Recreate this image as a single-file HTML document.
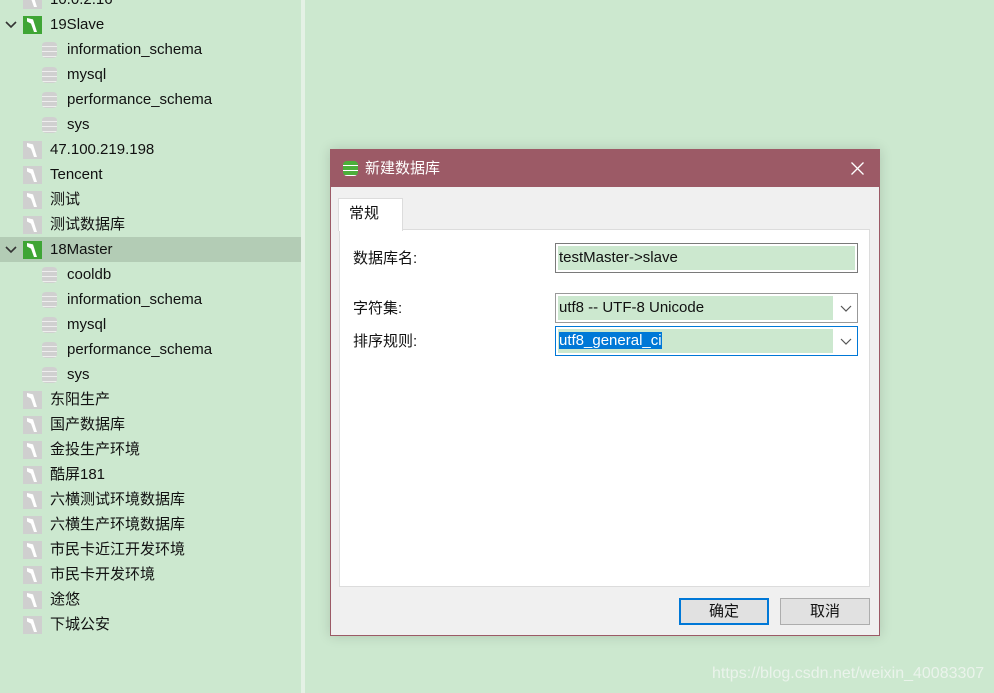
<!DOCTYPE html><html><head><meta charset="utf-8"><style>
body{margin:0;width:994px;height:693px;background:#cce8cf;position:relative;overflow:hidden;font-family:"Liberation Sans","Noto Sans CJK SC",sans-serif;font-size:15px;color:#111}
.side{position:absolute;left:0;top:0;width:301px;height:693px;background:#cce8cf}
.div{position:absolute;left:301px;top:0;width:4px;height:693px;background:#e4f1e5}
.row{position:absolute;left:0;width:301px;height:25px;line-height:25px}
.row.sel{background:#b3ccb5}
.srv{position:absolute;left:23px;top:4px;width:19px;height:18px;background:#cfcfcf}
.srv.g{background:#3fa535}
.srv::after{content:"";position:absolute;left:4px;top:2px;width:10px;height:14px;background:#fff;clip-path:polygon(0 0,60% 10%,100% 100%,70% 100%,40% 40%,0 25%)}
.db{position:absolute;left:42px;top:5px;width:15px;height:16px;background:repeating-linear-gradient(#d0d0d0 0 4px,#eee 4px 5px);border-radius:4px/3px}
.t1{position:absolute;left:50px}.t2{position:absolute;left:67px}
.arr{position:absolute;left:5px;top:9px;width:12px;height:8px}
.dlg{position:absolute;left:330px;top:149px;width:550px;height:487px;background:#f0f0f0;border:1px solid #9c5a66;box-sizing:border-box;box-shadow:0 0 12px rgba(0,0,0,.15)}
.tb{position:absolute;left:0;top:0;right:0;height:37px;background:#9c5a66;color:#fff;line-height:37px}
.panel{position:absolute;left:8px;top:79px;width:531px;height:358px;background:#fff;border:1px solid #dcdcdc;box-sizing:border-box}
.tab{position:absolute;left:7px;top:48px;width:65px;height:33px;background:#fff;border:1px solid #dcdcdc;border-bottom:none;box-sizing:border-box;line-height:30px;padding-left:10px}
.lbl{position:absolute;left:22px}
.inp{position:absolute;left:224px;width:303px;height:30px;border:1px solid #7a7a7a;box-sizing:border-box;background:#fff}
.inp .f{position:absolute;left:2px;top:2px;bottom:2px;background:#cce8cf;line-height:24px;padding-left:1px}
.inp svg{position:absolute;right:5px;top:11px}
.btn{position:absolute;top:448px;width:90px;height:27px;background:#e1e1e1;border:1px solid #adadad;box-sizing:border-box;text-align:center;line-height:25px}
</style></head><body>
<div class="side">
<div class="row" style="top:-13px"><div class="srv"></div><span class="t1">10.0.2.16</span></div>
<div class="row" style="top:12px"><svg class="arr" viewBox="0 0 12 8"><path d="M1 1L6 6L11 1" fill="none" stroke="#333" stroke-width="1.6"/></svg><div class="srv g"></div><span class="t1">19Slave</span></div>
<div class="row" style="top:37px"><div class="db"></div><span class="t2">information_schema</span></div>
<div class="row" style="top:62px"><div class="db"></div><span class="t2">mysql</span></div>
<div class="row" style="top:87px"><div class="db"></div><span class="t2">performance_schema</span></div>
<div class="row" style="top:112px"><div class="db"></div><span class="t2">sys</span></div>
<div class="row" style="top:137px"><div class="srv"></div><span class="t1">47.100.219.198</span></div>
<div class="row" style="top:162px"><div class="srv"></div><span class="t1">Tencent</span></div>
<div class="row" style="top:187px"><div class="srv"></div><span class="t1">测试</span></div>
<div class="row" style="top:212px"><div class="srv"></div><span class="t1">测试数据库</span></div>
<div class="row sel" style="top:237px"><svg class="arr" viewBox="0 0 12 8"><path d="M1 1L6 6L11 1" fill="none" stroke="#333" stroke-width="1.6"/></svg><div class="srv g"></div><span class="t1">18Master</span></div>
<div class="row" style="top:262px"><div class="db"></div><span class="t2">cooldb</span></div>
<div class="row" style="top:287px"><div class="db"></div><span class="t2">information_schema</span></div>
<div class="row" style="top:312px"><div class="db"></div><span class="t2">mysql</span></div>
<div class="row" style="top:337px"><div class="db"></div><span class="t2">performance_schema</span></div>
<div class="row" style="top:362px"><div class="db"></div><span class="t2">sys</span></div>
<div class="row" style="top:387px"><div class="srv"></div><span class="t1">东阳生产</span></div>
<div class="row" style="top:412px"><div class="srv"></div><span class="t1">国产数据库</span></div>
<div class="row" style="top:437px"><div class="srv"></div><span class="t1">金投生产环境</span></div>
<div class="row" style="top:462px"><div class="srv"></div><span class="t1">酷屏181</span></div>
<div class="row" style="top:487px"><div class="srv"></div><span class="t1">六横测试环境数据库</span></div>
<div class="row" style="top:512px"><div class="srv"></div><span class="t1">六横生产环境数据库</span></div>
<div class="row" style="top:537px"><div class="srv"></div><span class="t1">市民卡近江开发环境</span></div>
<div class="row" style="top:562px"><div class="srv"></div><span class="t1">市民卡开发环境</span></div>
<div class="row" style="top:587px"><div class="srv"></div><span class="t1">途悠</span></div>
<div class="row" style="top:612px"><div class="srv"></div><span class="t1">下城公安</span></div>
</div>
<div class="div"></div>
<div class="dlg">
<div class="tb"><span style="position:absolute;left:12px;top:11px;width:15px;height:15px;border-radius:4px;background:repeating-linear-gradient(#4caf3a 0 4px,#fff 4px 5px)"></span><span style="position:absolute;left:34px">新建数据库</span><svg style="position:absolute;right:15px;top:12px" width="13" height="13" viewBox="0 0 13 13"><path d="M0.5 0.5L12.5 12.5M12.5 0.5L0.5 12.5" stroke="#fff" stroke-width="1.3"/></svg></div>
<div class="panel"></div>
<div class="tab">常规</div>
<span class="lbl" style="top:98px;line-height:22px">数据库名:</span>
<div class="inp" style="top:93px"><div class="f" style="right:2px">testMaster-&gt;slave</div></div>
<span class="lbl" style="top:148px;line-height:22px">字符集:</span>
<div class="inp" style="top:143px;border-color:#999"><div class="f" style="right:24px">utf8 -- UTF-8 Unicode</div><svg width="12" height="7" viewBox="0 0 12 7"><path d="M1 1L6 6L11 1" fill="none" stroke="#555" stroke-width="1.2"/></svg></div>
<span class="lbl" style="top:181px;line-height:22px">排序规则:</span>
<div class="inp" style="top:176px;border-color:#0078d7"><div class="f" style="right:24px"><span style="background:#0078d7;color:#fff">utf8_general_ci</span></div><svg width="12" height="7" viewBox="0 0 12 7"><path d="M1 1L6 6L11 1" fill="none" stroke="#555" stroke-width="1.2"/></svg></div>
<div class="btn" style="left:348px;border:2px solid #0078d7;line-height:23px">确定</div>
<div class="btn" style="left:449px">取消</div>
</div>
<div style="position:absolute;left:712px;top:665px;color:#eaf3eb;font-size:16px">https://blog.csdn.net/weixin_40083307</div>
</body></html>
